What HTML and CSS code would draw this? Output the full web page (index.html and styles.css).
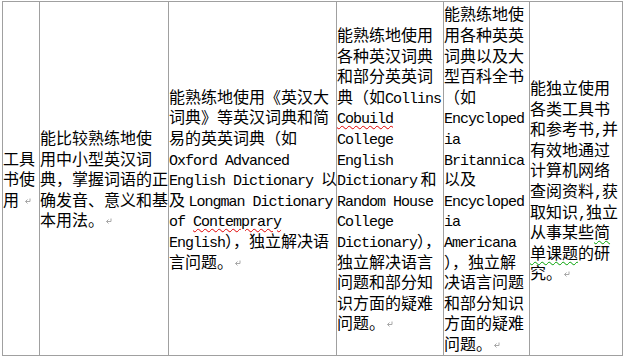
FILE: index.html
```html
<!DOCTYPE html>
<html lang="zh-CN">
<head>
<meta charset="utf-8">
<title>工具书使用</title>
<link rel="stylesheet" href="styles.css">
</head>
<body>
<div class="table">
  <div class="cell">
    <p>工具<br>书使<br>用 <svg class="pm" viewBox="0 0 7 6"><path d="M6 0.5V3.5H1.5M3.5 1.5L1.5 3.5L3.5 5.5"/></svg></p>
  </div>
  <div class="cell">
    <p>能比较熟练地使<br>用中小型英汉词<br>典，掌握词语的正<br>确发音、意义和基<br>本用法。<svg class="pm" viewBox="0 0 7 6"><path d="M6 0.5V3.5H1.5M3.5 1.5L1.5 3.5L3.5 5.5"/></svg></p>
  </div>
  <div class="cell">
    <p>能熟练地使用《英汉大<br>词典》等英汉词典和简<br>易的英英词典（如<br><span class="en">Oxford Advanced</span><br><span class="en">English Dictionary </span>以<br>及 <span class="en">Longman Dictionary</span><br><span class="en">of <span class="spell">Contemprary</span></span><br><span class="en">English</span>），独立解决语<br>言问题。<svg class="pm" viewBox="0 0 7 6"><path d="M6 0.5V3.5H1.5M3.5 1.5L1.5 3.5L3.5 5.5"/></svg></p>
  </div>
  <div class="cell">
    <p>能熟练地使用<br>各种英汉词典<br>和部分英英词<br>典（如<span class="en">Collins</span><br><span class="en spell">Cobuild</span><br><span class="en">College</span><br><span class="en">English</span><br><span class="en">Dictionary</span> 和<br><span class="en">Random House</span><br><span class="en">College</span><br><span class="en">Dictionary</span>），<br>独立解决语言<br>问题和部分知<br>识方面的疑难<br>问题。<svg class="pm" viewBox="0 0 7 6"><path d="M6 0.5V3.5H1.5M3.5 1.5L1.5 3.5L3.5 5.5"/></svg></p>
  </div>
  <div class="cell">
    <p>能熟练地使<br>用各种英英<br>词典以及大<br>型百科全书<br>（如<br><span class="en">Encycloped</span><br><span class="en">ia</span><br><span class="en">Britannica</span><br>以及<br><span class="en">Encycloped</span><br><span class="en">ia</span><br><span class="en">Americana</span><br>），独立解<br>决语言问题<br>和部分知识<br>方面的疑难<br>问题。<svg class="pm" viewBox="0 0 7 6"><path d="M6 0.5V3.5H1.5M3.5 1.5L1.5 3.5L3.5 5.5"/></svg></p>
  </div>
  <div class="cell last">
    <p>能独立使用<br>各类工具书<br>和参考书<span class="hw">,</span>并<br>有效地通过<br>计算机网络<br>查阅资料<span class="hw">,</span>获<br>取知识<span class="hw">,</span>独立<br>从事某些<span class="grammar">简<br>单课题</span>的研<br>究。<svg class="pm" viewBox="0 0 7 6"><path d="M6 0.5V3.5H1.5M3.5 1.5L1.5 3.5L3.5 5.5"/></svg></p>
  </div>
</div>
</body>
</html>
```

FILE: styles.css
```css
html, body {
  margin: 0;
  background: #fff;
}

body {
  padding: 1px 0 0 2px;
}

.table {
  position: relative;
  display: grid;
  grid-template-columns: 37px 129px 168px 107px 86px 93px;
  width: max-content;
  height: 355px;
  box-sizing: border-box;
  border: 1px solid #a0a0a0;
  border-right: 0;
}

.table::after {
  content: "";
  position: absolute;
  right: -2px;
  top: 13px;
  width: 1px;
  height: 1px;
  background: #808080;
}

.cell {
  box-sizing: border-box;
  border-right: 1px solid #a0a0a0;
  display: flex;
  flex-direction: column;
  justify-content: center;
  min-width: 0;
}

.cell.last p {
  padding-top: 3px;
}

.cell p {
  margin: 0;
  font-family: "Noto Sans CJK SC", sans-serif;
  font-size: 16px;
  line-height: 20.6px;
  color: #000;
  white-space: nowrap;
}

.en,
.hw {
  font-family: "Liberation Mono", monospace;
  font-size: 15px;
  letter-spacing: -1px;
  line-height: 12px;
}

.spell {
  text-decoration: underline wavy #e00000;
  text-decoration-thickness: 1px;
  text-underline-offset: 2px;
}

.grammar {
  text-decoration: underline wavy #00a000;
  text-decoration-thickness: 1px;
  text-underline-offset: 2px;
}

.pm {
  width: 7px;
  height: 6px;
  margin-left: 1px;
  vertical-align: 2px;
  fill: none;
  stroke: #a8a8a8;
  stroke-width: 1;
}
```
